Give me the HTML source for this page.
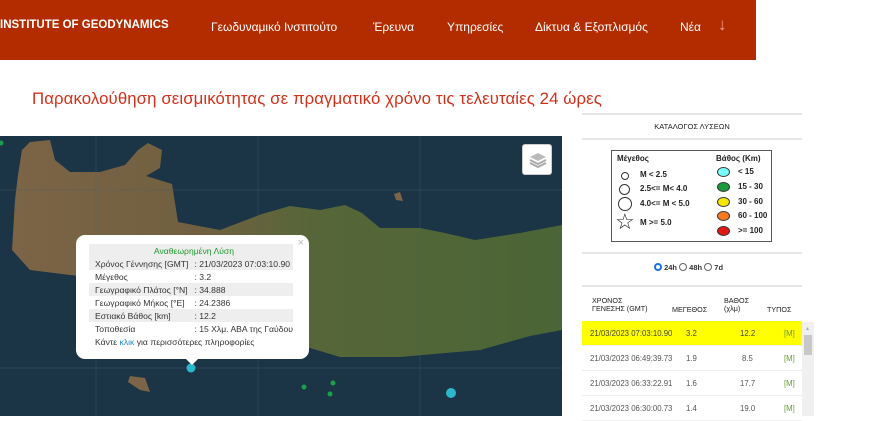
<!DOCTYPE html>
<html><head><meta charset="utf-8"><style>
*{margin:0;padding:0;box-sizing:border-box}
body{width:880px;height:416px;overflow:hidden;background:#fff;font-family:"Liberation Sans",sans-serif;position:relative}
.nav{position:absolute;left:0;top:0;width:756px;height:60px;background:#b22c00;color:#fff}
.nav span{position:absolute;top:20px;font-size:12px}
.title{position:absolute;left:32px;top:89px;font-size:16.8px;color:#d0311a;letter-spacing:0.1px;white-space:nowrap}
.map{position:absolute;left:0;top:136px;width:562px;height:280px;overflow:hidden;background:#1b3446}
.pop{position:absolute;left:76px;top:235px;width:233px;height:124px;background:#fff;border-radius:9px;font-size:8.6px;color:#333}
.pop table{position:absolute;left:13px;top:9px;width:183px;border-collapse:collapse}
.pop td{height:13px;padding:0 0 0 6px;white-space:nowrap}
.pop tr:nth-child(even) td{background:#eee}
.pop tr.h td{background:#eee;color:#1a9a2a;text-align:center}
.line{position:absolute;left:582px;width:220px;height:2px;background:#e6e6e6}
.legend{position:absolute;left:611px;top:150px;width:161px;height:92px;border:1.5px solid #555;font-size:8px;font-weight:bold;color:#222}
.legend div{position:absolute;white-space:nowrap}
.c{position:absolute;border:1px solid #333;border-radius:50%}
.row{position:absolute;left:582px;width:220px;height:25px;font-size:7.8px;color:#555;border-bottom:1px solid #eee}
.row span{position:absolute;top:8px}
</style></head><body>
<div class="nav">
<span style="left:0;font-weight:bold;font-size:11.5px;top:19px">INSTITUTE OF GEODYNAMICS</span>
<span style="left:211px">Γεωδυναμικό Ινστιτούτο</span>
<span style="left:373px">Έρευνα</span>
<span style="left:447px">Υπηρεσίες</span>
<span style="left:535px">Δίκτυα &amp; Εξοπλισμός</span>
<span style="left:680px">Νέα</span>
<span style="left:718px;font-size:17px;top:15px;color:#f0a090">↓</span>
</div>
<div class="title">Παρακολούθηση σεισμικότητας σε πραγματικό χρόνο τις τελευταίες 24 ώρες</div>

<div class="map">
<svg width="562" height="280" viewBox="0 136 562 280" style="position:absolute;left:0;top:0">
<defs><linearGradient id="g" x1="0" x2="1"><stop offset="0" stop-color="#7c6446"/><stop offset="0.35" stop-color="#706040"/><stop offset="0.55" stop-color="#566638"/><stop offset="1" stop-color="#4b6536"/></linearGradient></defs>
<path d="M15 200 L18 175 L22 150 L30 142 L50 140 L55 160 L70 172 L100 172 L125 165 L138 150 L148 143 L162 150 L160 168 L146 176 L172 184 L178 222 L220 230 L262 214 L290 206 L320 210 L345 205 L362 213 L380 228 L420 228 L445 233 L475 240 L520 233 L562 225 L562 330 L530 336 L480 350 L400 357 L340 357 L300 345 L290 318 L275 305 L230 300 L180 300 L120 280 L70 275 L30 270 L12 250 Z" fill="url(#g)"/>
<path d="M130 376 L145 378 L150 392 L140 390 L128 382 Z" fill="#7c6446"/>
<path d="M394 194 L400 192 L403 201 L396 200 Z" fill="#7c6446"/>
<g stroke="#4a6070" stroke-width="0.7" opacity="0.5"><line x1="0" y1="190" x2="562" y2="190"/><line x1="0" y1="368" x2="562" y2="368"/><line x1="96" y1="136" x2="96" y2="416"/><line x1="258" y1="136" x2="258" y2="416"/><line x1="420" y1="136" x2="420" y2="416"/></g>
<circle cx="191" cy="368" r="4.5" fill="#2bb8cc"/>
<circle cx="451" cy="393" r="5" fill="#2bb8cc"/>
<circle cx="304" cy="387" r="2.5" fill="#1aa04a"/><circle cx="333" cy="383" r="2.5" fill="#1aa04a"/><circle cx="330" cy="394" r="2.5" fill="#1aa04a"/><circle cx="1" cy="143" r="2.5" fill="#1aa04a"/>
</svg>
<div style="position:absolute;left:522px;top:8px;width:30px;height:31px;background:#fff;border-radius:3px;border:1px solid #ccc">
<svg width="30" height="30"><path d="M7 18 L15 22 L23 18 M7 15 L15 19 L23 15" fill="none" stroke="#aaa" stroke-width="2"/><path d="M7 12 L15 8 L23 12 L15 16 Z" fill="#bbb"/></svg></div>
</div>

<div class="pop">
<span style="position:absolute;right:5px;top:2px;color:#bbb;font-size:11px">×</span>
<table>
<tr class="h"><td colspan="2">Αναθεωρημένη Λύση</td></tr>
<tr><td>Χρόνος Γέννησης [GMT]</td><td>: 21/03/2023 07:03:10.90</td></tr>
<tr><td>Μέγεθος</td><td>: 3.2</td></tr>
<tr><td>Γεωγραφικό Πλάτος [°N]</td><td>: 34.888</td></tr>
<tr><td>Γεωγραφικό Μήκος [°E]</td><td>: 24.2386</td></tr>
<tr><td>Εστιακό Βάθος [km]</td><td>: 12.2</td></tr>
<tr><td>Τοποθεσία</td><td>: 15 Χλμ. ΑΒΑ της Γαύδου</td></tr>
<tr><td colspan="2" style="background:#fff">Κάντε <span style="color:#1a8ac8">κλικ</span> για περισσότερες πληροφορίες</td></tr>
</table>
<div style="position:absolute;left:110px;bottom:-6px;width:0;height:0;border-left:6px solid transparent;border-right:6px solid transparent;border-top:6px solid #fff"></div>
</div>

<div class="line" style="top:113px"></div>
<div style="position:absolute;left:582px;top:122px;width:220px;text-align:center;font-size:7.5px;color:#222">ΚΑΤΑΛΟΓΟΣ ΛΥΣΕΩΝ</div>
<div class="line" style="top:138px"></div>
<div class="legend">
<div style="left:5px;top:3px">Μέγεθος</div>
<div style="left:104px;top:3px">Βάθος (Km)</div>
<span class="c" style="left:9px;top:21px;width:8px;height:8px"></span><div style="left:28px;top:19px">M &lt; 2.5</div>
<span class="c" style="left:7px;top:33px;width:11px;height:11px"></span><div style="left:28px;top:33px">2.5&lt;= M&lt; 4.0</div>
<span class="c" style="left:6px;top:46px;width:14px;height:14px"></span><div style="left:28px;top:48px">4.0&lt;= M &lt; 5.0</div>
<div style="left:3px;top:60px;font-size:22px;font-weight:normal;line-height:22px">☆</div><div style="left:28px;top:67px">M &gt;= 5.0</div>
<span class="c" style="left:105px;top:16px;width:13px;height:10px;background:#7ff"></span><div style="left:126px;top:16px">&lt; 15</div>
<span class="c" style="left:105px;top:31px;width:13px;height:10px;background:#1a9a3a"></span><div style="left:126px;top:31px">15 - 30</div>
<span class="c" style="left:105px;top:46px;width:13px;height:10px;background:#f5e800"></span><div style="left:126px;top:46px">30 - 60</div>
<span class="c" style="left:105px;top:60px;width:13px;height:10px;background:#f77a20"></span><div style="left:126px;top:60px">60 - 100</div>
<span class="c" style="left:105px;top:75px;width:13px;height:10px;background:#e01818"></span><div style="left:126px;top:75px">&gt;= 100</div>
</div>
<div class="line" style="top:252px"></div>
<div style="position:absolute;left:654px;top:263px;font-size:7.5px;font-weight:bold;color:#333;white-space:nowrap">
<span style="display:inline-block;width:8px;height:8px;border-radius:50%;border:2.5px solid #1a73e8;vertical-align:-1px"></span> 24h <span style="display:inline-block;width:8px;height:8px;border-radius:50%;border:1px solid #666;vertical-align:-1px"></span> 48h <span style="display:inline-block;width:8px;height:8px;border-radius:50%;border:1px solid #666;vertical-align:-1px"></span> 7d</div>
<div class="line" style="top:285px"></div>
<div style="position:absolute;left:592px;top:297px;font-size:7.2px;color:#222;line-height:8px">ΧΡΟΝΟΣ<br>ΓΕΝΕΣΗΣ (GMT)</div>
<div style="position:absolute;left:672px;top:305px;font-size:7.2px;color:#222">ΜΕΓΕΘΟΣ</div>
<div style="position:absolute;left:724px;top:297px;font-size:7.2px;color:#222;line-height:8px">ΒΑΘΟΣ<br>(χλμ)</div>
<div style="position:absolute;left:767px;top:305px;font-size:7.2px;color:#222">ΤΥΠΟΣ</div>
<div class="row" style="top:321px;background:#ffff00;color:#444"><span style="left:8px">21/03/2023 07:03:10.90</span><span style="left:104px">3.2</span><span style="left:158px">12.2</span><span style="left:202px;color:#6a9a3a">[M]</span></div>
<div class="row" style="top:346px"><span style="left:8px">21/03/2023 06:49:39.73</span><span style="left:104px">1.9</span><span style="left:160px">8.5</span><span style="left:202px;color:#6a9a3a">[M]</span></div>
<div class="row" style="top:371px"><span style="left:8px">21/03/2023 06:33:22.91</span><span style="left:104px">1.6</span><span style="left:158px">17.7</span><span style="left:202px;color:#6a9a3a">[M]</span></div>
<div class="row" style="top:396px"><span style="left:8px">21/03/2023 06:30:00.73</span><span style="left:104px">1.4</span><span style="left:158px">19.0</span><span style="left:202px;color:#6a9a3a">[M]</span></div>
<div style="position:absolute;left:802px;top:322px;width:12px;height:94px;background:#f0f0f0"></div>
<div style="position:absolute;left:804px;top:335px;width:8px;height:20px;background:#c8c8c8"></div>
<div style="position:absolute;left:805px;top:326px;font-size:5px;color:#aaa">▲</div>
</body></html>
